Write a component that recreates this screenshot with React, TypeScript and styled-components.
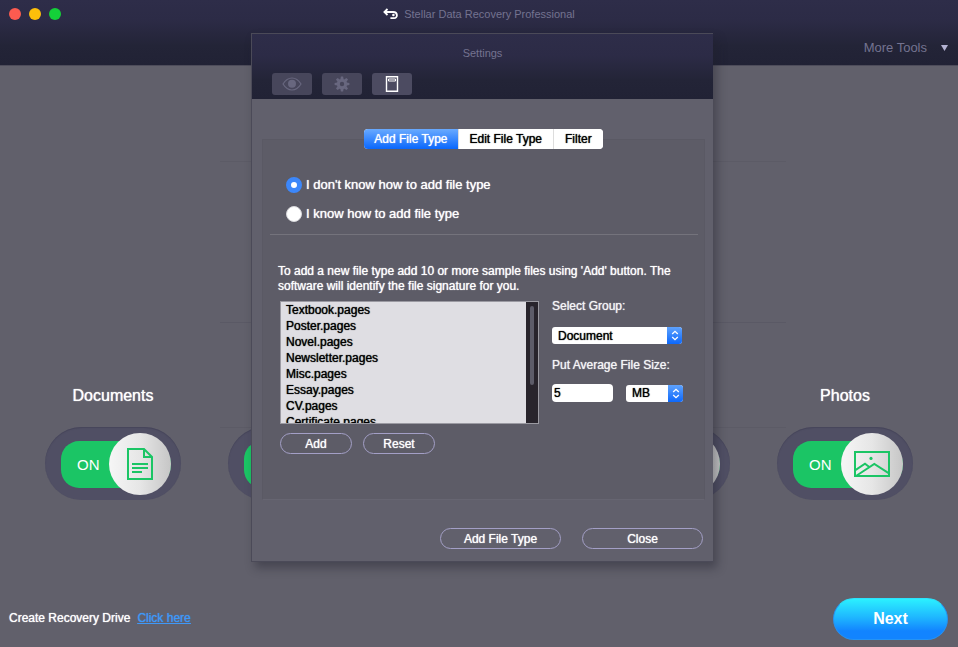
import React from "react";
import styled, { createGlobalStyle, css } from "styled-components";

const GlobalStyle = createGlobalStyle`
  *, *::before, *::after { box-sizing: border-box; }
  body { margin: 0; background: #61606b; }
  body, button, input, select {
    font-family: "Liberation Sans", Arial, Helvetica, sans-serif;
  }
`;

const strong = css`
  text-shadow: 0 0 1px currentColor;
`;

const Window = styled.div`
  position: relative;
  display: flex;
  flex-direction: column;
  min-height: 100vh;
  color: #fff;
  font-size: 12px;
  background: #61606b;
`;

const TitleBar = styled.header`
  display: flex;
  flex-direction: column;
  height: 66px;
  background: linear-gradient(#2e2d49 0, #2c2b46 20px, #232437 46px, #212235 100%);
  border-bottom: 1px solid #4d4c5a;
`;

const TitleRow = styled.div`
  display: grid;
  grid-template-columns: 1fr auto 1fr;
  align-items: center;
  height: 28px;
  padding: 0 9px;
`;

const Lights = styled.div`
  display: flex;
  gap: 8px;
`;

const Light = styled.button<{ $color: string }>`
  width: 12px;
  height: 12px;
  padding: 0;
  border: 0;
  border-radius: 50%;
  background: ${(p) => p.$color};
`;

const AppTitle = styled.h1`
  display: flex;
  align-items: center;
  gap: 6px;
  margin: 0;
  font-size: 11px;
  line-height: 16px;
  font-weight: 400;
  color: #747390;
`;

const ToolsRow = styled.div`
  display: flex;
  justify-content: flex-end;
  padding: 12px 10px 0 0;
`;

const ToolsButton = styled.button`
  display: flex;
  align-items: center;
  gap: 14px;
  padding: 0;
  border: 0;
  background: none;
  font-size: 13px;
  line-height: 16px;
  color: #747390;
`;

const Main = styled.main`
  display: grid;
  flex: 1;
  align-items: start;
`;

const Stage = styled.div`
  grid-area: 1 / 1;
  display: grid;
  grid-template-rows: 160px 105px;
  margin: 95px 18% 0 23%;
  border: solid #5c5b66;
  border-width: 1px 0;
`;

const StageRow = styled.div`
  & + & {
    border-top: 1px solid #5a5965;
  }
`;

const Categories = styled.div`
  grid-area: 1 / 1;
  display: flex;
  justify-content: space-between;
  padding: 320px 45px 0 45px;
`;

const Category = styled.div`
  display: flex;
  flex-direction: column;
  align-items: center;
  gap: 21px;
`;

const CategoryName = styled.span`
  height: 20px;
  font-size: 16px;
  line-height: 20px;
  ${strong}
`;

const Toggle = styled.button`
  display: flex;
  width: 136px;
  height: 73px;
  padding: 6px 10px 5px 16px;
  align-items: center;
  border: 0;
  border-radius: 37px;
  background: #504f64;
  box-shadow: inset 0 1px 1px #46455a;
  color: #fff;
`;

const ToggleFill = styled.span`
  display: flex;
  flex: 1;
  align-items: center;
  justify-content: space-between;
  height: 47px;
  padding-left: 16px;
  border-radius: 24px 31px 31px 24px;
  background: #1bc565;
  font-size: 15px;
`;

const Knob = styled.span`
  display: flex;
  align-items: center;
  justify-content: center;
  width: 62px;
  height: 62px;
  margin-left: auto;
  border-radius: 50%;
  background: linear-gradient(90deg, #f6f6f6, #e6e6e6 50%, #c6c6c6);
`;

const Footer = styled.footer`
  display: flex;
  align-items: center;
  justify-content: space-between;
  padding: 0 10px 7px 9px;
`;

const DriveNote = styled.p`
  display: flex;
  gap: 7px;
  margin: 0 0 2px;
  font-size: 12px;
  line-height: 16px;
  ${strong}
`;

const DriveLink = styled.a`
  color: #3f98f8;
  text-decoration: underline;
`;

const NextButton = styled.button`
  width: 115px;
  height: 42px;
  padding: 0;
  border: 1px solid #2593f5;
  border-top-color: #2be3fd;
  border-radius: 21px;
  background: linear-gradient(#2bf0ff, #1fb8ff 45%, #1284ff 80%, #1284ff);
  color: #fff;
  font-size: 16px;
  font-weight: 700;
`;

const DialogLayer = styled.div`
  position: absolute;
  inset: 33px 0 auto 6px;
  display: flex;
  justify-content: center;
  pointer-events: none;
`;

const Dialog = styled.section`
  pointer-events: auto;
  width: 462px;
  border: 1px solid #4b4a58;
  border-right-width: 0;
  background: #61606c;
  box-shadow: 4px 6px 9px rgba(30, 30, 42, 0.4);
`;

const DialogHeader = styled.div`
  display: flex;
  flex-direction: column;
  gap: 12px;
  height: 65px;
  padding: 11px 0 0 20px;
  background: linear-gradient(#2e2d49 0, #2c2b46 22px, #232437 46px, #212235 100%);
`;

const DialogTitle = styled.h2`
  margin: 0 20px 0 0;
  text-align: center;
  font-size: 11px;
  line-height: 16px;
  font-weight: 400;
  color: #747390;
`;

const IconTabs = styled.div`
  display: flex;
  gap: 10px;
`;

const IconTab = styled.button<{ $active?: boolean }>`
  display: flex;
  align-items: center;
  justify-content: center;
  width: 40px;
  height: 22px;
  padding: 0;
  border: 0;
  border-radius: 3px;
  background: ${(p) => (p.$active ? "#4c4b61" : "#47465b")};
  color: ${(p) => (p.$active ? "#fff" : "#68677f")};
`;

const DialogBody = styled.div`
  display: flex;
  flex-direction: column;
  padding: 30px 8px 12px 10px;
`;

const TabStrip = styled.div`
  z-index: 1;
  display: flex;
  align-self: center;
  height: 20px;
  margin-bottom: -10px;
  overflow: hidden;
  border-radius: 4px;
  background: #fff;
`;

const Tab = styled.button<{ $active?: boolean }>`
  padding: 0 11px;
  border: 0;
  background: #fff;
  color: #000;
  font-size: 12px;
  ${strong}

  & + & {
    border-left: 1px solid #ddd;
  }

  ${(p) =>
    p.$active &&
    css`
      padding: 0 10px;
      background: linear-gradient(#69aaff, #0a67fc);
      color: #fff;
    `}
`;

const Panel = styled.div`
  display: flex;
  flex-direction: column;
  height: 361px;
  padding: 37px 6px 0 7px;
  border: 1px solid #5a5964;
  border-bottom-color: #666571;
  background: #5d5c67;
`;

const RadioGroup = styled.div`
  display: flex;
  flex-direction: column;
  gap: 13px;
  padding: 0 16px 12px;
  border-bottom: 1px solid #74737c;
`;

const RadioLabel = styled.label`
  display: flex;
  align-items: center;
  gap: 4px;
  font-size: 13px;
  line-height: 16px;
  ${strong}
`;

const Radio = styled.input`
  appearance: none;
  width: 16px;
  height: 16px;
  margin: 0;
  border: 1px solid #d8d8dc;
  border-radius: 50%;
  background: #fff;

  &:checked {
    border: 5px solid #3c87fa;
  }
`;

const Help = styled.p`
  margin: 29px 0 4px;
  padding: 0 8px;
  font-size: 12px;
  line-height: 15px;
  ${strong}
`;

const Columns = styled.div`
  display: flex;
  gap: 13px;
  padding: 0 10px;
`;

const FileBox = styled.div`
  display: flex;
  width: 259px;
  height: 123px;
  margin-top: 3px;
  border: 1px solid #9b9aa2;
  background: #dfdee3;
`;

const FileList = styled.ul`
  flex: 1;
  margin: 0;
  padding: 0 5px;
  overflow: hidden;
  list-style: none;
  color: #000;
  font-size: 12px;
  line-height: 16px;
  ${strong}
`;

const ScrollTrack = styled.div`
  width: 12px;
  padding: 4px;
  background: #28242c;
`;

const ScrollThumb = styled.div`
  height: 79px;
  border-radius: 2px;
  background: #5d5c69;
`;

const Fields = styled.div`
  display: flex;
  flex: 1;
  flex-direction: column;
`;

const FieldLabel = styled.label`
  line-height: 16px;
  font-size: 12px;
  color: #f4f4f6;
  ${strong}
`;

const SizeRow = styled.div`
  display: flex;
  align-items: center;
  gap: 13px;
  padding-top: 11px;
`;

const Picker = styled.span<{ $wide?: boolean }>`
  display: grid;
  grid-template-columns: 1fr 15px;
  width: ${(p) => (p.$wide ? "130px" : "57px")};
  height: 17px;
  margin: ${(p) => (p.$wide ? "13px 0" : "0")};
  overflow: hidden;
  border-radius: 3px;
`;

const PickerSelect = styled.select`
  appearance: none;
  grid-area: 1 / 1 / 2 / 3;
  width: 100%;
  padding: 0 6px;
  border: 0;
  background: #fff;
  color: #000;
  font-size: 12px;
  ${strong}
`;

const PickerArrows = styled.span`
  grid-area: 1 / 2;
  display: flex;
  align-items: center;
  justify-content: center;
  background: linear-gradient(#5ea2fd, #0d68fb);
  pointer-events: none;
`;

const SizeInput = styled.input`
  width: 61px;
  height: 18px;
  padding: 0 2px;
  border: 0;
  border-radius: 4px;
  background: #fff;
  color: #000;
  font-size: 12px;
  ${strong}
`;

const Pill = styled.button<{ $wide?: boolean }>`
  width: ${(p) => (p.$wide ? "121px" : "72px")};
  height: 21px;
  padding: 0;
  border: 1px solid #a39fc6;
  border-radius: 11px;
  background: transparent;
  color: #fff;
  font-size: 12px;
  ${strong}
`;

const ListActions = styled.div`
  display: flex;
  gap: 11px;
  padding: 9px 10px 0;
`;

const DialogActions = styled.div`
  display: flex;
  justify-content: flex-end;
  gap: 21px;
  padding: 28px 2px 0 0;
`;

const BackIcon = () => (
  <svg width="15" height="12" viewBox="0 0 15 12" fill="none" stroke="#fff" strokeWidth="1.8" aria-hidden="true">
    <path d="M4.5 1 1.4 4l3.1 3M1.5 4h8.7c4.8 0 4.8 6.2.8 6.2H7.4" />
    <circle cx="10.4" cy="7" r="1.3" fill="#fff" stroke="none" />
  </svg>
);

const EyeIcon = () => (
  <svg width="20" height="14" viewBox="0 0 20 14" fill="none" stroke="currentColor" strokeWidth="1.2" aria-hidden="true">
    <path d="M1 7c5-8 13-8 18 0-5 8-13 8-18 0Z" />
    <circle cx="10" cy="6.8" r="4" fill="currentColor" stroke="none" />
  </svg>
);

const GearIcon = () => (
  <svg width="16" height="16" viewBox="-8 -8 16 16" aria-hidden="true">
    <circle r="3.7" fill="none" stroke="currentColor" strokeWidth="3" />
    {[0, 45, 90, 135, 180, 225, 270, 315].map((angle) => (
      <path key={angle} d="M-1.6-4.7-1.1-7.4h2.2l.5 2.7Z" fill="currentColor" transform={`rotate(${angle})`} />
    ))}
  </svg>
);

const FileTypeIcon = () => (
  <svg width="14" height="16" viewBox="0 0 14 16" fill="none" stroke="currentColor" aria-hidden="true">
    <path d="M1.5.7h11v14.6h-11Z" strokeWidth="1.4" />
    <path d="M3.5 3h7v2h-7Z" />
  </svg>
);

const DocumentIcon = () => (
  <svg width="28" height="34" viewBox="0 0 28 34" fill="none" stroke="#1bc565" strokeWidth="2" aria-hidden="true">
    <path d="M2 2h16l8 8v22H2ZM18 2v8h8M6 17h16M6 21h16M6 25h10" />
  </svg>
);

const PhotoIcon = () => (
  <svg width="36" height="26" viewBox="0 0 36 26" fill="none" stroke="#1bc565" strokeWidth="2" aria-hidden="true">
    <path d="M1 1h34v24H1ZM1 19.3l10-6.6 4 3M2 25l18.3-12L35 22.3" />
    <circle cx="17" cy="7.4" r="1.6" fill="#1bc565" stroke="none" />
  </svg>
);

const Arrows = () => (
  <svg width="8" height="11" viewBox="0 0 8 11" fill="none" stroke="#fff" strokeWidth="1.3" aria-hidden="true">
    <path d="m1.2 4 2.8-2.7L6.8 4M1.2 7 4 9.7 6.8 7" />
  </svg>
);

const categories = [
  { id: "documents", name: "Documents", icon: <DocumentIcon /> },
  { id: "second" },
  { id: "third" },
  { id: "fourth" },
  { id: "photos", name: "Photos", icon: <PhotoIcon /> },
];

const files = [
  "Textbook.pages",
  "Poster.pages",
  "Novel.pages",
  "Newsletter.pages",
  "Misc.pages",
  "Essay.pages",
  "CV.pages",
  "Certificate.pages",
];

export default function App() {
  return (
    <>
      <GlobalStyle />
      <Window>
        <TitleBar>
          <TitleRow>
            <Lights>
              <Light $color="#fc5b50" aria-label="Close window" />
              <Light $color="#fdbf0a" aria-label="Minimize window" />
              <Light $color="#14d139" aria-label="Zoom window" />
            </Lights>
            <AppTitle>
              <BackIcon />
              Stellar Data Recovery Professional
            </AppTitle>
          </TitleRow>
          <ToolsRow>
            <ToolsButton>
              More Tools
              <svg width="7" height="6" viewBox="0 0 7 6" aria-hidden="true">
                <path d="M0 0h7L3.5 6Z" fill="#b4b2d2" />
              </svg>
            </ToolsButton>
          </ToolsRow>
        </TitleBar>

        <Main>
          <Stage>
            <StageRow />
            <StageRow />
          </Stage>
          <Categories>
            {categories.map(({ id, name, icon }) => (
              <Category key={id}>
                <CategoryName id={id}>{name}</CategoryName>
                <Toggle role="switch" aria-checked="true" aria-labelledby={id}>
                  <ToggleFill>
                    {name && "ON"}
                    <Knob>{icon}</Knob>
                  </ToggleFill>
                </Toggle>
              </Category>
            ))}
          </Categories>
        </Main>

        <Footer>
          <DriveNote>
            Create Recovery Drive <DriveLink href="#drive">Click here</DriveLink>
          </DriveNote>
          <NextButton>Next</NextButton>
        </Footer>

        <DialogLayer>
          <Dialog role="dialog" aria-labelledby="settings-title">
            <DialogHeader>
              <DialogTitle id="settings-title">Settings</DialogTitle>
              <IconTabs>
                <IconTab aria-label="Preview"><EyeIcon /></IconTab>
                <IconTab aria-label="Advanced"><GearIcon /></IconTab>
                <IconTab $active aria-label="File types"><FileTypeIcon /></IconTab>
              </IconTabs>
            </DialogHeader>
            <DialogBody>
              <TabStrip role="tablist">
                <Tab $active role="tab" aria-selected="true">Add File Type</Tab>
                <Tab role="tab">Edit File Type</Tab>
                <Tab role="tab">Filter</Tab>
              </TabStrip>
              <Panel role="tabpanel">
                <RadioGroup role="radiogroup">
                  <RadioLabel>
                    <Radio type="radio" name="mode" defaultChecked />
                    I don't know how to add file type
                  </RadioLabel>
                  <RadioLabel>
                    <Radio type="radio" name="mode" />
                    I know how to add file type
                  </RadioLabel>
                </RadioGroup>
                <Help>
                  To add a new file type add 10 or more sample files using 'Add' button. The
                  software will identify the file signature for you.
                </Help>
                <Columns>
                  <FileBox>
                    <FileList>
                      {files.map((file) => (
                        <li key={file}>{file}</li>
                      ))}
                    </FileList>
                    <ScrollTrack>
                      <ScrollThumb />
                    </ScrollTrack>
                  </FileBox>
                  <Fields>
                    <FieldLabel htmlFor="group">Select Group:</FieldLabel>
                    <Picker $wide>
                      <PickerSelect id="group">
                        <option>Document</option>
                      </PickerSelect>
                      <PickerArrows><Arrows /></PickerArrows>
                    </Picker>
                    <FieldLabel htmlFor="size">Put Average File Size:</FieldLabel>
                    <SizeRow>
                      <SizeInput id="size" defaultValue="5" />
                      <Picker>
                        <PickerSelect aria-label="Size unit">
                          <option>MB</option>
                        </PickerSelect>
                        <PickerArrows><Arrows /></PickerArrows>
                      </Picker>
                    </SizeRow>
                  </Fields>
                </Columns>
                <ListActions>
                  <Pill>Add</Pill>
                  <Pill>Reset</Pill>
                </ListActions>
              </Panel>
              <DialogActions>
                <Pill $wide>Add File Type</Pill>
                <Pill $wide>Close</Pill>
              </DialogActions>
            </DialogBody>
          </Dialog>
        </DialogLayer>
      </Window>
    </>
  );
}
